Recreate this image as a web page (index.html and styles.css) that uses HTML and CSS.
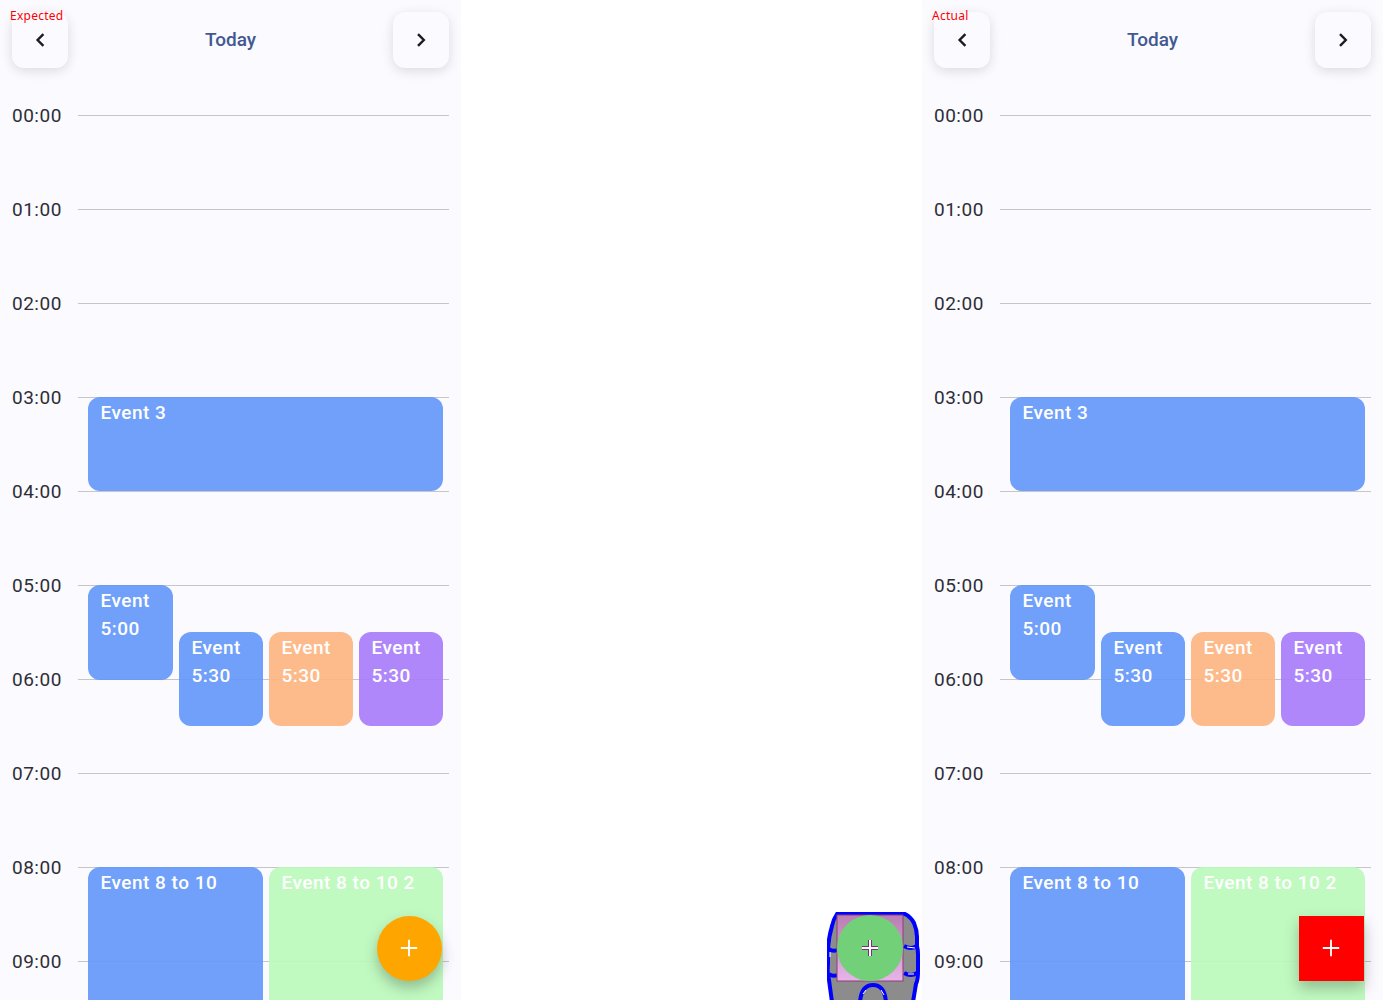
FILE: index.html
```html
<!DOCTYPE html>
<html lang="en">
<head>
  <meta charset="UTF-8">
  <title>Calendar diff</title>
  <link rel="stylesheet" href="styles.css">
</head>
<body>
  <div class="page">
    <div class="panel">
      <span class="caption">Expected</span>
      <div class="header">
        <button class="nav-btn"><svg width="24" height="24" viewBox="0 0 24 24"><path d="M15.400 6.200 9.600 12l5.800 5.800"/></svg></button>
        <span class="title">Today</span>
        <button class="nav-btn"><svg width="24" height="24" viewBox="0 0 24 24"><path d="M9 6.200 14.800 12 9 17.800"/></svg></button>
      </div>
      <div class="timeline">
        <div class="hour"><span class="time">00:00</span><span class="line"></span></div>
        <div class="hour"><span class="time">01:00</span><span class="line"></span></div>
        <div class="hour"><span class="time">02:00</span><span class="line"></span></div>
        <div class="hour"><span class="time">03:00</span><span class="line"></span></div>
        <div class="hour"><span class="time">04:00</span><span class="line"></span></div>
        <div class="hour"><span class="time">05:00</span><span class="line"></span></div>
        <div class="hour"><span class="time">06:00</span><span class="line"></span></div>
        <div class="hour"><span class="time">07:00</span><span class="line"></span></div>
        <div class="hour"><span class="time">08:00</span><span class="line"></span></div>
        <div class="hour"><span class="time">09:00</span><span class="line"></span></div>
        <div class="event blue ev-3">Event 3</div>
        <div class="event blue ev-5">Event<br>5:00</div>
        <div class="event blue ev-530a">Event<br>5:30</div>
        <div class="event orange ev-530b">Event<br>5:30</div>
        <div class="event purple ev-530c">Event<br>5:30</div>
        <div class="event blue ev-8a">Event 8 to 10</div>
        <div class="event green ev-8b">Event 8 to 10 2</div>
      </div>
      <button class="fab fab-round"><svg width="28" height="28" viewBox="0 0 24 24"><path d="M19 12.800h-6.200V19h-1.600v-6.200H5v-1.600h6.200V5h1.600v6.200H19z"/></svg></button>
    </div>

    <div class="panel-diff">
      <svg class="diff-blob" width="95" height="90" viewBox="0 0 95 90">
        <defs>
          <linearGradient id="squareFill" x1="0" y1="0" x2="0" y2="1">
            <stop offset="0" stop-color="#ba7db4"/>
            <stop offset="1" stop-color="#e8b4e8"/>
          </linearGradient>
        </defs>
        <path class="blob-shadow" d="M10 4h68q6 3 9 9 3 7 3 14v9q1 4 1 8v18q0 8-2 12l-3 18H5L2 70Q0 64 1 54V38q1-12 4-22 1-6 5-12z"/>
        <path class="blob-edge" d="M77 36q7 4 13 0M77 63q7 4 13 0M10 40q-4 2-8-1M10 65q-4 2-8-1M59 92C58 80 53 75 46 75c-7 0-12 5-13 17"/>
        <path class="blob-speck" d="M80 37l8 1M81 64l6 0M3 42l0 5M36 84l3-4M54 80l3 5"/>
        <rect class="blob-square" x="10" y="5" width="66" height="66" fill="url(#squareFill)"/>
        <circle class="blob-circle" cx="43" cy="38" r="33"/>
        <path class="blob-plus-edge" d="M35 38h16M43 30v16"/>
        <path class="blob-plus" d="M35 38h16M43 30v16"/>
      </svg>
    </div>

    <div class="panel">
      <span class="caption">Actual</span>
      <div class="header">
        <button class="nav-btn"><svg width="24" height="24" viewBox="0 0 24 24"><path d="M15.400 6.200 9.600 12l5.800 5.800"/></svg></button>
        <span class="title">Today</span>
        <button class="nav-btn"><svg width="24" height="24" viewBox="0 0 24 24"><path d="M9 6.200 14.800 12 9 17.800"/></svg></button>
      </div>
      <div class="timeline">
        <div class="hour"><span class="time">00:00</span><span class="line"></span></div>
        <div class="hour"><span class="time">01:00</span><span class="line"></span></div>
        <div class="hour"><span class="time">02:00</span><span class="line"></span></div>
        <div class="hour"><span class="time">03:00</span><span class="line"></span></div>
        <div class="hour"><span class="time">04:00</span><span class="line"></span></div>
        <div class="hour"><span class="time">05:00</span><span class="line"></span></div>
        <div class="hour"><span class="time">06:00</span><span class="line"></span></div>
        <div class="hour"><span class="time">07:00</span><span class="line"></span></div>
        <div class="hour"><span class="time">08:00</span><span class="line"></span></div>
        <div class="hour"><span class="time">09:00</span><span class="line"></span></div>
        <div class="event blue ev-3">Event 3</div>
        <div class="event blue ev-5">Event<br>5:00</div>
        <div class="event blue ev-530a">Event<br>5:30</div>
        <div class="event orange ev-530b">Event<br>5:30</div>
        <div class="event purple ev-530c">Event<br>5:30</div>
        <div class="event blue ev-8a">Event 8 to 10</div>
        <div class="event green ev-8b">Event 8 to 10 2</div>
      </div>
      <button class="fab fab-square"><svg width="28" height="28" viewBox="0 0 24 24"><path d="M19 12.800h-6.200V19h-1.600v-6.200H5v-1.600h6.200V5h1.600v6.200H19z"/></svg></button>
    </div>
  </div>
</body>
</html>
```

FILE: styles.css
```css
html, body {
  margin: 0;
  padding: 0;
  background-color: white;
}

.page {
  display: flex;
  width: 1383px;
  height: 1000px;
  overflow: hidden;
  font-family: Roboto, "Liberation Sans", sans-serif;
}

.panel {
  position: relative;
  width: 461px;
  height: 1000px;
  overflow: hidden;
  background-color: #fafaff;
}

.panel-diff {
  position: relative;
  width: 461px;
  height: 1000px;
  background-color: white;
}

.caption {
  position: absolute;
  z-index: 2;
  left: 10px;
  top: 8px;
  font-family: "Noto Sans", sans-serif;
  font-size: 12px;
  line-height: 16px;
  letter-spacing: 0.25px;
  color: red;
}

.header {
  display: flex;
  align-items: center;
  justify-content: space-between;
  padding: 12px 12px 0;
  height: 56px;
}

.nav-btn {
  display: flex;
  align-items: center;
  justify-content: center;
  width: 56px;
  height: 56px;
  padding: 0;
  border: none;
  border-radius: 12px;
  background-color: #fafaff;
  box-shadow: 0 3px 12px rgba(0, 0, 0, 0.13);
}

.nav-btn svg {
  fill: none;
  stroke: #1b1b23;
  stroke-width: 2.4;
}

.title {
  padding-bottom: 1px;
  font-size: 19px;
  font-weight: 500;
  color: #41598f;
}

.timeline {
  position: relative;
  padding-top: 37px;
}

.hour {
  display: flex;
  height: 94px;
  padding: 0 12px;
}

.time {
  width: 66px;
  height: 20px;
  font-size: 19px;
  line-height: 21px;
  letter-spacing: 0.5px;
  color: #2e2e36;
}

.line {
  flex: 1;
  height: 1px;
  margin-top: 10px;
  background-color: #c6c6c8;
}

/* events sit on top of the hour rows */
.event {
  position: absolute;
  box-sizing: border-box;
  padding: 2px 12.500px;
  border-radius: 12px;
  font-size: 19px;
  font-weight: 500;
  line-height: 28px;
  letter-spacing: 0.5px;
  color: white;
}

.blue { background-color: rgba(96, 150, 250, 0.9); }
.orange { background-color: rgba(253, 178, 125, 0.9); }
.purple { background-color: rgba(167, 122, 250, 0.9); }
.green { background-color: rgba(186, 250, 186, 0.9); }

.ev-3 { left: 88px; top: 329px; width: 355px; height: 94px; }
.ev-5 { left: 88px; top: 517px; width: 85px; height: 95px; }
.ev-530a { left: 179px; top: 564px; width: 84px; height: 94px; }
.ev-530b { left: 269px; top: 564px; width: 84px; height: 94px; }
.ev-530c { left: 359px; top: 564px; width: 84px; height: 94px; }
.ev-8a { left: 88px; top: 799px; width: 175px; height: 188px; }
.ev-8b { left: 269px; top: 799px; width: 174px; height: 188px; }

.fab {
  position: absolute;
  left: 376.500px;
  top: 915.500px;
  display: flex;
  align-items: center;
  justify-content: center;
  width: 65.500px;
  height: 65.500px;
  padding: 0;
  border: none;
  box-shadow: 0 7px 14px rgba(0, 0, 0, 0.25);
}

.fab svg {
  fill: white;
}

.fab-round {
  border-radius: 50%;
  background-color: #ffa500;
}

.fab-square {
  background-color: red;
}

.diff-blob {
  position: absolute;
  left: 366px;
  top: 910px;
}

.blob-shadow {
  fill: #8c8c8c;
  stroke: blue;
  stroke-width: 4;
}

.blob-edge {
  fill: none;
  stroke: blue;
  stroke-width: 4;
}

.blob-speck {
  fill: none;
  stroke: white;
  stroke-width: 1;
}

.blob-square {
  stroke: #8a3f78;
  stroke-width: 1;
}

.blob-circle {
  fill: #72d078;
}

.blob-plus-edge {
  fill: none;
  stroke: #7a2f78;
  stroke-width: 4;
}

.blob-plus {
  fill: none;
  stroke: white;
  stroke-width: 2;
}
```
